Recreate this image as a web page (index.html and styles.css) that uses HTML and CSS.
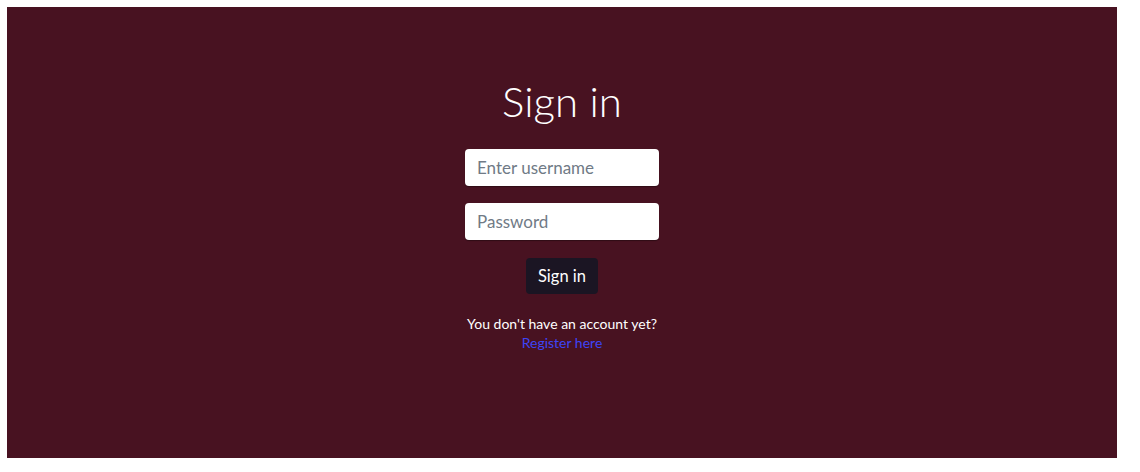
FILE: index.html
```html
<!DOCTYPE html>
<html lang="en">
<head>
<meta charset="utf-8">
<title>Sign in</title>
<link rel="stylesheet" href="styles.css">
</head>
<body>
<main class="panel">
  <form class="signin">
    <h1 class="title">Sign in</h1>
    <input class="field" type="text" placeholder="Enter username">
    <input class="field" type="password" placeholder="Password">
    <button class="btn" type="button">Sign in</button>
    <p class="note">You don't have an account yet?<br><a class="link" href="#">Register here</a></p>
  </form>
</main>
</body>
</html>
```

FILE: styles.css
```css
* { box-sizing: border-box; }
html, body { margin: 0; padding: 0; background: #fff; }
body { font-family: "Lato", "Open Sans", sans-serif; }
.panel {
  margin: 7px 0 0 7px;
  width: 1110px;
  height: 451px;
  background: #481221;
  display: flex;
  justify-content: center;
}
.signin {
  display: flex;
  flex-direction: column;
  align-items: center;
  padding-top: 70px;
}
.title {
  margin: 0 0 24px;
  font-size: 42px;
  font-weight: 300;
  color: #fff;
  line-height: 48px;
}
.field {
  width: 194px;
  height: 37px;
  border: 0;
  border-radius: 4px;
  padding: 0 12px;
  font-family: inherit;
  font-size: 17px;
  color: #212529;
  background: #fff;
  box-shadow: 0 1px 1px rgba(0,0,0,0.35);
  margin-bottom: 17px;
  outline: none;
}
.field::placeholder { color: #707a86; }
.btn {
  margin-top: 1px;
  width: 72px;
  height: 36px;
  border: 0;
  border-radius: 4px;
  background: #1b1523;
  color: #fff;
  font-family: inherit;
  font-size: 16.5px;
}
.note {
  margin: 20px 0 0;
  text-align: center;
  color: #fff;
  font-size: 14px;
  line-height: 19px;
}
.link { color: #3d44f5; text-decoration: none; }
```
